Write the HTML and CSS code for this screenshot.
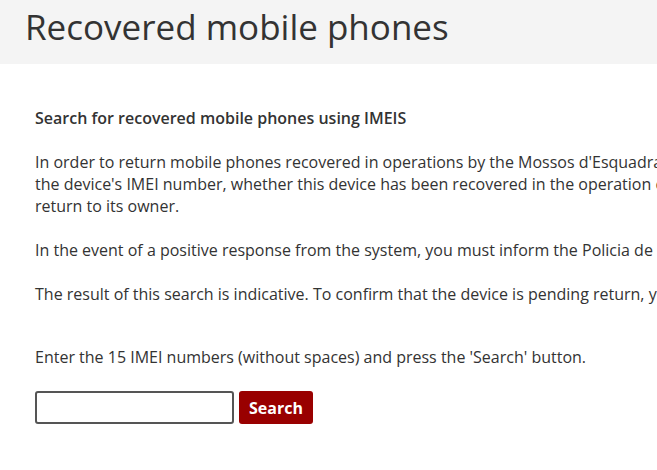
FILE: index.html
```html
<!DOCTYPE html>
<html lang="en">
<head>
<meta charset="utf-8">
<title>Recovered mobile phones</title>
<link rel="stylesheet" href="styles.css">
</head>
<body>
<header class="page-header">
  <h1 class="page-title">Recovered mobile phones</h1>
</header>
<main class="content">
  <h2 class="section-title">Search for recovered mobile phones using IMEIS</h2>
  <p class="text">In order to return mobile phones recovered in operations by the Mossos d'Esquadra (the Catalan police force), you can check, using<br>the device's IMEI number, whether this device has been recovered in the operation carried out by the police and is pending<br>return to its owner.</p>
  <p class="text">In the event of a positive response from the system, you must inform the Policia de la Generalitat - Mossos d'Esquadra.</p>
  <p class="text">The result of this search is indicative. To confirm that the device is pending return, you must contact the police station.</p>
  <form class="search-form">
    <label class="form-label" for="imei">Enter the 15 IMEI numbers (without spaces) and press the 'Search' button.</label>
    <div class="form-row">
      <input class="imei-input" id="imei" type="text">
      <button class="search-btn" type="button">Search</button>
    </div>
  </form>
</main>
</body>
</html>
```
FILE: styles.css
```css
html, body {
  margin: 0;
  padding: 0;
  overflow: hidden;
  background: #fff;
}
body {
  font-family: "Open Sans", "Liberation Sans", sans-serif;
  color: #333;
}
.page-header {
  background: #f4f4f4;
  height: 64px;
  padding: 0 0 0 25px;
  box-sizing: border-box;
}
.page-title {
  margin: 0;
  font-weight: 400;
  font-size: 35px;
  line-height: 54px;
  color: #333;
  white-space: nowrap;
}
.content {
  padding: 43px 0 0 35px;
  width: 1200px;
}
.section-title {
  margin: 0 0 22px;
  font-size: 16px;
  font-weight: 600;
  line-height: 22px;
  color: #333;
}
.text {
  margin: 0 0 22px;
  font-size: 16px;
  line-height: 22px;
  white-space: nowrap;
}
.search-form {
  margin-top: 41px;
}
.form-label {
  display: block;
  font-size: 16px;
  line-height: 22px;
  margin-bottom: 23px;
}
.form-row {
  display: flex;
  gap: 5px;
}
.imei-input {
  width: 199px;
  height: 33px;
  box-sizing: border-box;
  border: 2px solid #555;
  border-radius: 3px;
  padding: 0 6px;
  font-family: inherit;
}
.search-btn {
  width: 74px;
  height: 33px;
  background: #990000;
  color: #fff;
  border: none;
  border-radius: 3px;
  font-family: inherit;
  font-weight: 700;
  font-size: 16px;
  padding: 0;
}
```
